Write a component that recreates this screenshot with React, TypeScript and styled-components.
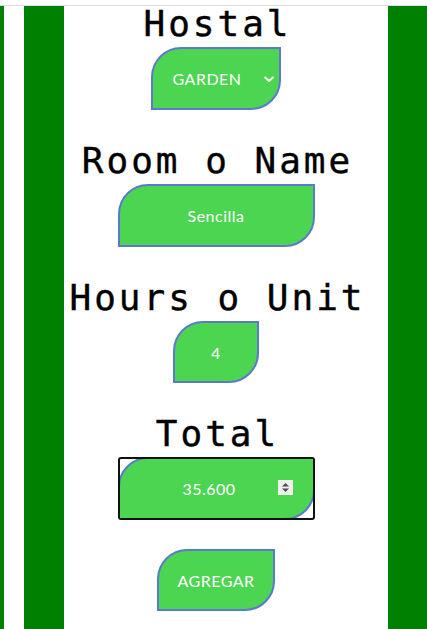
import React from "react";
import styled, { createGlobalStyle, css } from "styled-components";

const Global = createGlobalStyle`
  html, body { margin: 0; padding: 0; background: #ffffff; }
  body { font-family: "Liberation Sans", Arial, sans-serif; }
`;

const GREEN = "#008000";
const LEAF = "#4cd551";
const LEAF_BORDER = "#5a79cf";

const Page = styled.div`
  display: flex;
  flex-direction: column;
  min-height: 100vh;
`;

const TopEdge = styled.div`
  height: 5px;
  flex: none;
  border-bottom: 1px solid #dcdcdc;
`;

const Stripes = styled.div`
  flex: 1;
  display: flex;
`;

const Stripe = styled.div<{ $w?: number; $green?: boolean }>`
  flex: ${(p) => (p.$w ? `0 0 ${p.$w}px` : "1 1 auto")};
  background: ${(p) => (p.$green ? GREEN : "#ffffff")};
`;

const Main = styled.main`
  flex: 0 0 324px;
  box-sizing: border-box;
  padding-right: 20px;
  display: flex;
  flex-direction: column;
  align-items: center;
`;

const Label = styled.h2<{ $first?: boolean }>`
  margin: ${(p) => (p.$first ? "-2px" : "31px")} -3px 3px 0;
  font-family: "DejaVu Sans Mono", "Liberation Mono", monospace;
  font-weight: normal;
  font-size: 36px;
  letter-spacing: 3px;
  line-height: 40px;
  color: #000;
  -webkit-text-stroke: 0.4px #000;
  white-space: nowrap;
`;

const leaf = css`
  box-sizing: border-box;
  height: 63px;
  border: 2px solid ${LEAF_BORDER};
  border-radius: 30px 0;
  background: ${LEAF};
  color: #ffffff;
  font-family: "Lato", "Open Sans", sans-serif;
  font-size: 16px;
  letter-spacing: 0.5px;
  text-align: center;
  outline: none;
`;

const LeafInput = styled.input<{ $w: number; $h?: number }>`
  ${leaf};
  width: ${(p) => p.$w}px;
  height: ${(p) => p.$h ?? 63}px;
  padding: 0 10px;
`;

const SelectWrap = styled.div`
  position: relative;
  width: 130px;
`;

const Select = styled.select`
  ${leaf};
  width: 130px;
  appearance: none;
  -webkit-appearance: none;
  padding: 0 28px 0 10px;
  text-align-last: center;
`;

const Chevron = styled.svg`
  position: absolute;
  right: 7px;
  top: 29px;
  width: 10px;
  height: 7px;
  pointer-events: none;
`;

const FocusRing = styled.div`
  position: relative;
  box-sizing: border-box;
  width: 197px;
  height: 63px;
  border: 2px solid #111111;
  border-radius: 3px;
  overflow: hidden;
`;

const TotalInput = styled.input`
  ${leaf};
  display: block;
  width: 197px;
  margin: -2px;
  padding: 0 28px 0 14px;
  caret-color: #222;
`;

const Spinner = styled.svg`
  position: absolute;
  right: 20px;
  top: 21px;
  width: 15px;
  height: 15px;
  pointer-events: none;
`;

const Button = styled.button`
  ${leaf};
  width: 118px;
  height: 62px;
  margin-top: 29px;
  cursor: pointer;
`;

export default function App() {
  return (
    <Page>
      <Global />
      <TopEdge />
      <Stripes>
        <Stripe $w={4} $green />
        <Stripe $w={20} />
        <Stripe $w={40} $green />
        <Main>
          <Label $first>Hostal</Label>
          <SelectWrap>
            <Select defaultValue="GARDEN">
              <option value="GARDEN">GARDEN</option>
            </Select>
            <Chevron viewBox="0 0 10 7">
              <path d="M1.2 1.5 L5 5 L8.8 1.5" fill="none" stroke="#ffffff" strokeWidth="2" strokeLinecap="round" strokeLinejoin="round" />
            </Chevron>
          </SelectWrap>

          <Label>Room o Name</Label>
          <LeafInput $w={197} defaultValue="Sencilla" />

          <Label>Hours o Unit</Label>
          <LeafInput $w={86} $h={62} defaultValue="4" />

          <Label>Total</Label>
          <FocusRing>
            <TotalInput defaultValue="35.600" autoFocus />
            <Spinner viewBox="0 0 15 15">
              <rect width="15" height="15" fill="#efefef" />
              <path d="M4 6.5 L7.5 3 L11 6.5 Z" fill="#505050" />
              <path d="M4 8.5 L7.5 12 L11 8.5 Z" fill="#505050" />
            </Spinner>
          </FocusRing>

          <Button type="button">AGREGAR</Button>
        </Main>
        <Stripe $green />
      </Stripes>
    </Page>
  );
}
